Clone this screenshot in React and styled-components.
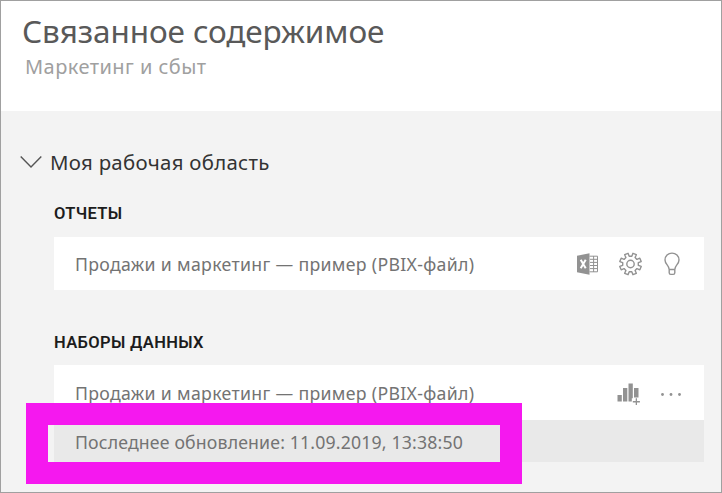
import React from "react";
import styled, { createGlobalStyle } from "styled-components";

const GlobalStyle = createGlobalStyle`
  * { box-sizing: border-box; }
  body { margin: 0; }
`;

const Panel = styled.main`
  position: relative;
  width: 722px;
  height: 493px;
  overflow: hidden;
  border: 1px solid #a0a0a0;
  background: #f3f3f3;
  font-family: "Noto Sans", "Open Sans", sans-serif;
  white-space: nowrap;
`;

const Header = styled.header`
  height: 110px;
  padding: 9px 0 0 21px;
  background: #fff;
`;

const Title = styled.h1`
  margin: 0;
  font-size: 31.5px;
  line-height: 42px;
  font-weight: 400;
  color: #595959;
  letter-spacing: -0.1px;
`;

const Subtitle = styled.p`
  margin: 1px 0 0 3px;
  font-size: 20px;
  line-height: 28px;
  letter-spacing: 0.45px;
  color: #a0a0a0;
`;

const Workspace = styled.button`
  display: flex;
  align-items: center;
  gap: 8px;
  height: 30px;
  margin: 36px 0 0 19px;
  padding: 0;
  border: 0;
  background: none;
  font: 400 20.4px/30px "Noto Sans", "Open Sans", sans-serif;
  letter-spacing: 0.3px;
  color: #333;
`;

const Section = styled.section`
  width: 650px;
  margin: ${(p) => p.$top}px 0 0 53px;
`;

const SectionTitle = styled.h2`
  margin: 0;
  height: 34px;
  font: 600 16.5px/${(p) => p.$line}px Roboto, sans-serif;
  letter-spacing: 0.35px;
  color: #1c1c1c;
`;

const Row = styled.div`
  display: flex;
  align-items: center;
  justify-content: space-between;
  height: ${(p) => p.$height}px;
  padding: 0 ${(p) => p.$end || 22}px 0 21px;
  background: #fff;
`;

const Name = styled.span`
  font-size: 17.7px;
  line-height: 24px;
  color: #737373;
  letter-spacing: ${(p) => p.$spacing}px;
`;

const Actions = styled.div`
  display: flex;
  align-items: center;
  gap: ${(p) => p.$gap}px;
  color: #929292;

  svg { display: block; }
`;

const RefreshRow = styled(Row)`
  padding-top: 2px;
  background: #e9e9e9;
`;

const Highlight = styled.div`
  position: absolute;
  left: 25px;
  top: 402px;
  width: 496px;
  height: 81px;
  border: 22px solid #f518ef;
  pointer-events: none;
`;

const Chevron = () => (
  <svg width="22" height="14" viewBox="0 0 22 14" fill="none" stroke="#555" strokeWidth="1.4">
    <path d="M.7 1.5 11 12 21.3 1.5" />
  </svg>
);

const ExcelIcon = () => (
  <svg width="21" height="22" viewBox="0 0 21 22">
    <path fill="currentColor" d="M0 2.8 12.5.3v21.4L0 19.2z" />
    <path fill="none" stroke="currentColor" d="M12.5 3.2h8v15.6h-8M13 6.3h7.5M13 9.4h7.5M13 12.5h7.5M13 15.6h7.5M16.6 3v16" />
    <path fill="none" stroke="#fff" strokeWidth="2" d="m3.7 6.8 5 8.4m0-8.4-5 8.4" />
  </svg>
);

const polar = (radius, degrees) => {
  const angle = (degrees * Math.PI) / 180;
  return `${(11.5 + radius * Math.sin(angle)).toFixed(2)} ${(12 - radius * Math.cos(angle)).toFixed(2)}`;
};

const gearOutline =
  Array.from({ length: 8 }, (_, tooth) => {
    const center = 22.5 + tooth * 45;
    return `${tooth ? "L" : "M"}${polar(7.9, center - 13)}L${polar(11, center - 9.5)}L${polar(11, center + 9.5)}L${polar(7.9, center + 13)}`;
  }).join("") + "Z";

const GearIcon = () => (
  <svg width="24" height="24" viewBox="0 0 24 24" fill="none" stroke="currentColor" strokeWidth="1.4" strokeLinejoin="round">
    <path d={gearOutline} />
    <circle cx="11.5" cy="12" r="3.7" />
  </svg>
);

const BulbIcon = () => (
  <svg width="18" height="24" viewBox="0 0 18 24" fill="none" stroke="currentColor" strokeWidth="1.4">
    <path d="M6.2 17.5C6.2 13.5 2 12.3 2 8a7 6.900 0 0 1 14 0c0 4.300-4.200 5.500-4.200 9.500zM6.200 17.500v3.300q0 1.600 1.600 1.600h2.400q1.600 0 1.600-1.600v-3.300" />
  </svg>
);

const ReportIcon = () => (
  <svg width="24" height="24" viewBox="0 0 24 24" fill="currentColor">
    <path d="M.5 14h4.300v6.500H.5zM6 7h4.300v13.500H6zM11.500 2.500h4.300v14.700h-1v3.300h-3.300zM17 7h4.500v9.500H17z" />
    <path d="M18.700 17.200h1.300v2.900h2.900v1.300H20v2.600h-1.300v-2.600h-2.900v-1.300h2.900z" />
  </svg>
);

const MoreIcon = () => (
  <svg width="22" height="6" viewBox="0 0 22 6" fill="currentColor">
    <circle cx="2.5" cy="4.5" r="1.4" />
    <circle cx="11" cy="4.5" r="1.4" />
    <circle cx="19.5" cy="4.5" r="1.4" />
  </svg>
);

const REPORT_NAME = "Продажи и маркетинг — пример (PBIX-файл)";

export default function App() {
  return (
    <>
      <GlobalStyle />
      <Panel>
        <Header>
          <Title>Связанное содержимое</Title>
          <Subtitle>Маркетинг и сбыт</Subtitle>
        </Header>
        <Workspace>
          <Chevron />
          Моя рабочая область
        </Workspace>
        <Section $top={26}>
          <SectionTitle $line={22}>ОТЧЕТЫ</SectionTitle>
          <Row $height={53} $end={23}>
            <Name $spacing={0.32}>{REPORT_NAME}</Name>
            <Actions $gap={20.5}>
              <ExcelIcon />
              <GearIcon />
              <BulbIcon />
            </Actions>
          </Row>
        </Section>
        <Section $top={41}>
          <SectionTitle $line={24}>НАБОРЫ ДАННЫХ</SectionTitle>
          <Row $height={55}>
            <Name $spacing={0.32}>{REPORT_NAME}</Name>
            <Actions $gap={19}>
              <ReportIcon />
              <MoreIcon />
            </Actions>
          </Row>
          <RefreshRow $height={42}>
            <Name $spacing={0.16}>Последнее обновление: 11.09.2019, 13:38:50</Name>
          </RefreshRow>
        </Section>
        <Highlight />
      </Panel>
    </>
  );
}
